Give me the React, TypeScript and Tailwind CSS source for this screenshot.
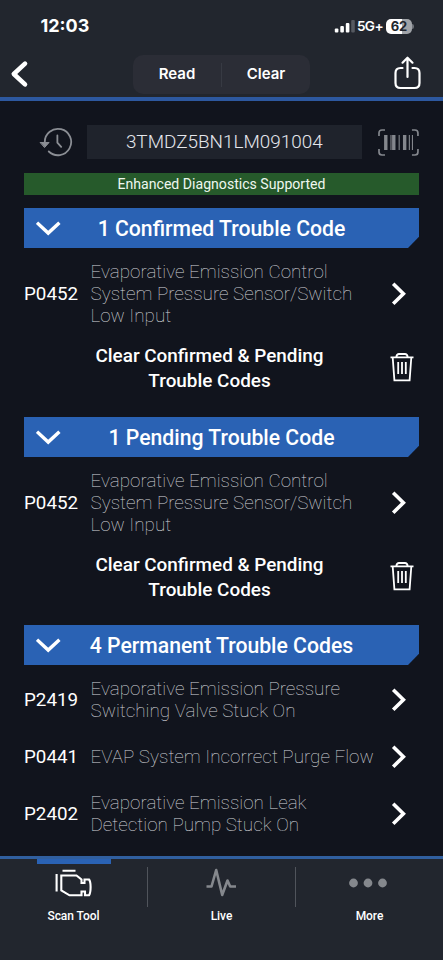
import type { ReactNode } from "react";

function SectionHeader({ children }: { children: ReactNode }) {
  return (
    <div className="flex h-10 items-center bg-[#2a62b4] pl-3 [clip-path:polygon(0_0,100%_0,100%_72%,calc(100%-11px)_100%,0_100%)]">
      <svg width="25" height="16" viewBox="0 0 25 16" fill="none" stroke="#fff" strokeWidth="3.4">
        <path d="M1 2.7 12.2 13.1 23.4 2.7" />
      </svg>
      <h2 className="flex-1 pt-0.5 pr-[37px] text-center text-[21.2px] leading-10 font-medium whitespace-nowrap text-white">
        {children}
      </h2>
    </div>
  );
}

function CodeRow({ code, lines }: { code: string; lines: string[] }) {
  return (
    <div className="flex items-center">
      <span className="w-[66.5px] shrink-0 text-[18.8px] leading-[22px] text-white">{code}</span>
      <p className="flex-1 pt-px text-[18.85px] leading-[22px] font-thin whitespace-nowrap text-[#d3d5da]">
        {lines.map((line) => (
          <span key={line} className="block">{line}</span>
        ))}
      </p>
      <svg className="mr-3 shrink-0" width="16" height="26" viewBox="0 0 16 26" fill="none" stroke="#fff" strokeWidth="3.6">
        <path d="M2.2 2.7 12.4 12.7 2.2 22.7" />
      </svg>
    </div>
  );
}

function ClearRow() {
  return (
    <div className="mt-4 flex h-[50px] items-center">
      <p className="ml-[67px] w-[237px] text-center text-[18.9px] leading-[25px] font-medium whitespace-nowrap text-white">
        Clear Confirmed &amp; Pending
        <br />
        Trouble Codes
      </p>
      <svg className="mt-[-2px] ml-[61px]" width="26" height="30" viewBox="0 0 26 30" fill="none" stroke="#fff" strokeWidth="1.8">
        <path d="M1.5 5.3h23M3.7 5.5l1.7 22.8h15.2l1.7-22.8M7.3 5Q7.8 2 10 2h6q2.2 0 2.7 3M9.2 10v12M13 10v12M16.8 10v12" />
      </svg>
    </div>
  );
}

const pressureLines = ["Evaporative Emission Control", "System Pressure Sensor/Switch", "Low Input"];

function StatusBar() {
  return (
    <div className="flex h-[52px] items-center pr-[29px] pl-[40.5px] font-[Inter,sans-serif] text-white">
      <span className="text-[18px] leading-5 font-bold">12:03</span>
      <div className="ml-auto flex items-center">
        <svg width="21" height="13" viewBox="0 0 21 13" fill="#fff">
          <rect x="0.8" y="8.5" width="3.6" height="4" rx="1" />
          <rect x="6.3" y="6" width="3.6" height="6.5" rx="1" />
          <rect x="11.8" y="3" width="3.6" height="9.5" rx="1" />
          <rect x="17.2" y="0" width="3.6" height="12.5" rx="1" fill="#555960" />
        </svg>
        <span className="ml-[2px] text-[13.6px] leading-4 font-semibold tracking-[-0.6px]">5G+</span>
        <div className="ml-[3px] flex h-[15px] w-[26px] items-center justify-center rounded-[5px] bg-linear-to-r from-white from-62% to-[#a0a3a8] to-62% text-[13px] leading-none font-bold text-[#22262e]">
          62
        </div>
        <div className="h-[5px] w-[2px] rounded-r-sm bg-[#6c7077]" />
      </div>
    </div>
  );
}

function NavItem({ label, active = false, children }: { label: string; active?: boolean; children: ReactNode }) {
  return (
    <div className="flex flex-1 flex-col items-center">
      <div className={`h-[5px] w-[74px] ${active ? "bg-[#2a62b4]" : ""}`} />
      <div className="flex h-[40px] items-center justify-center">{children}</div>
      <span className="mt-[4px] text-[12px] leading-4 font-medium tracking-[-0.05px] text-white">{label}</span>
    </div>
  );
}

export default function App() {
  return (
    <div className="flex h-[960px] w-[443px] flex-col overflow-hidden bg-[#11141d] font-[Roboto,sans-serif]">
      <header className="h-[101px] shrink-0 border-b-4 border-[#2d589f] bg-[#22262e]">
        <StatusBar />
        <div className="flex h-[45px] items-center">
          <svg className="mt-[-2px] ml-[10px]" width="20" height="30" viewBox="0 0 20 30" fill="none" stroke="#fff" strokeWidth="4.6" strokeLinecap="round" strokeLinejoin="round">
            <path d="M15 4.6 3.8 15 15 25.4" />
          </svg>
          <div className="ml-[103px] flex h-[39px] w-[177px] items-center rounded-[10px] bg-[#2b2d36] font-[Inter,sans-serif] text-[15px] font-semibold text-white">
            <span className="w-[88px] text-center">Read</span>
            <span className="h-6 w-px bg-[#373a43]" />
            <span className="w-[88px] text-center">Clear</span>
          </div>
          <svg className="mt-[-3px] ml-[83px]" width="29" height="35" viewBox="0 0 29 35" fill="none" stroke="#fff" strokeWidth="2.2" strokeLinecap="round" strokeLinejoin="round">
            <path d="M9.5 12H7.5Q2.5 12 2.5 17V27Q2.5 32 7.5 32H21.5Q26.5 32 26.5 27V17Q26.5 12 21.5 12H19.5M14.5 21V2M9.5 6.7l5-5 5 5" />
          </svg>
        </div>
      </header>

      <main className="min-h-0 flex-1 px-6 pt-6">
        <div className="flex h-[34px] items-center">
          <svg className="ml-[15px]" width="34" height="30" viewBox="0 0 34 30" fill="none" stroke="#8b8e94" strokeWidth="1.8" strokeLinecap="round">
            <path d="M5.8 15.4A13.2 13.2 0 1 1 9.8 24.5M18.4 8.5v7.2l3.8 4.2" />
            <path d="M1.5 15.5h8.6l-4.3 4.8z" fill="#8b8e94" strokeWidth="1" strokeLinejoin="round" />
          </svg>
          <div className="ml-[14px] h-[34px] w-[275px] bg-[#1f232c] text-center text-[18.9px] leading-[34px] font-light text-[#e5e7ec]">
            3TMDZ5BN1LM091004
          </div>
          <svg className="ml-[16.5px]" width="41" height="27" viewBox="0 0 41 27" fill="none" stroke="#84878d">
            <path strokeWidth="1.7" d="M7 1H4Q1 1 1 4V7M34 1h3q3 0 3 3V7M1 20v3q0 3 3 3h3M40 20v3q0 3-3 3h-3" />
            <path strokeWidth="3.4" d="M7.8 6v15M15.8 6v15M26.7 6v15" />
            <path strokeWidth="1.1" d="M13 6v15M21.2 6v15M31.4 6v15M34.5 6v15" />
          </svg>
        </div>

        <div className="mt-[14px] h-[22px] bg-[#265a2b] text-center text-[14.1px] leading-[22px] text-[#eef7ef]">
          Enhanced Diagnostics Supported
        </div>

        <section className="mt-[13px]">
          <SectionHeader>1 Confirmed Trouble Code</SectionHeader>
          <div className="mt-3">
            <CodeRow code="P0452" lines={pressureLines} />
            <ClearRow />
          </div>
        </section>

        <section className="mt-6">
          <SectionHeader>1 Pending Trouble Code</SectionHeader>
          <div className="mt-3">
            <CodeRow code="P0452" lines={pressureLines} />
            <ClearRow />
          </div>
        </section>

        <section className="mt-[23px]">
          <SectionHeader>4 Permanent Trouble Codes</SectionHeader>
          <div className="mt-3 flex flex-col gap-[21.5px]">
            <CodeRow code="P2419" lines={["Evaporative Emission Pressure", "Switching Valve Stuck On"]} />
            <CodeRow code="P0441" lines={["EVAP System Incorrect Purge Flow"]} />
            <CodeRow code="P2402" lines={["Evaporative Emission Leak", "Detection Pump Stuck On"]} />
          </div>
        </section>
      </main>

      <nav className="flex h-[104px] shrink-0 border-t-3 border-[#305f9f] bg-[#22262e]">
        <NavItem label="Scan Tool" active>
          <svg className="mt-[-2px]" width="37" height="28" viewBox="0 0 37 28" fill="none" stroke="#fff" strokeWidth="2.1">
            <path d="M7.5 1.8h13M1.6 5v17.5M6.3 6.5H21.5L26.5 10.5V14H29.5V10.5H34Q35.6 12.5 35.6 18Q35.6 24 34 26.3H30V22.5H26.5V26.3H14.5L6.3 21.5Z" />
          </svg>
        </NavItem>
        <div className="mt-[8px] h-10 w-px bg-[#50545b]" />
        <NavItem label="Live">
          <svg className="mt-[-3px]" width="31" height="29" viewBox="0 0 31 29" fill="none" stroke="#85888d" strokeWidth="2.6" strokeLinejoin="round">
            <path d="M0.5 18.5H5.5L10.2 2 16.2 27 21.5 12.5 24.2 18.5H30" />
          </svg>
        </NavItem>
        <div className="mt-[8px] h-10 w-px bg-[#50545b]" />
        <NavItem label="More">
          <svg className="mt-[-2px] mr-[3px]" width="38" height="10" viewBox="0 0 38 10" fill="#85888d">
            <circle cx="4.5" cy="5" r="4.4" />
            <circle cx="19" cy="5" r="4.4" />
            <circle cx="33.5" cy="5" r="4.4" />
          </svg>
        </NavItem>
      </nav>
    </div>
  );
}
